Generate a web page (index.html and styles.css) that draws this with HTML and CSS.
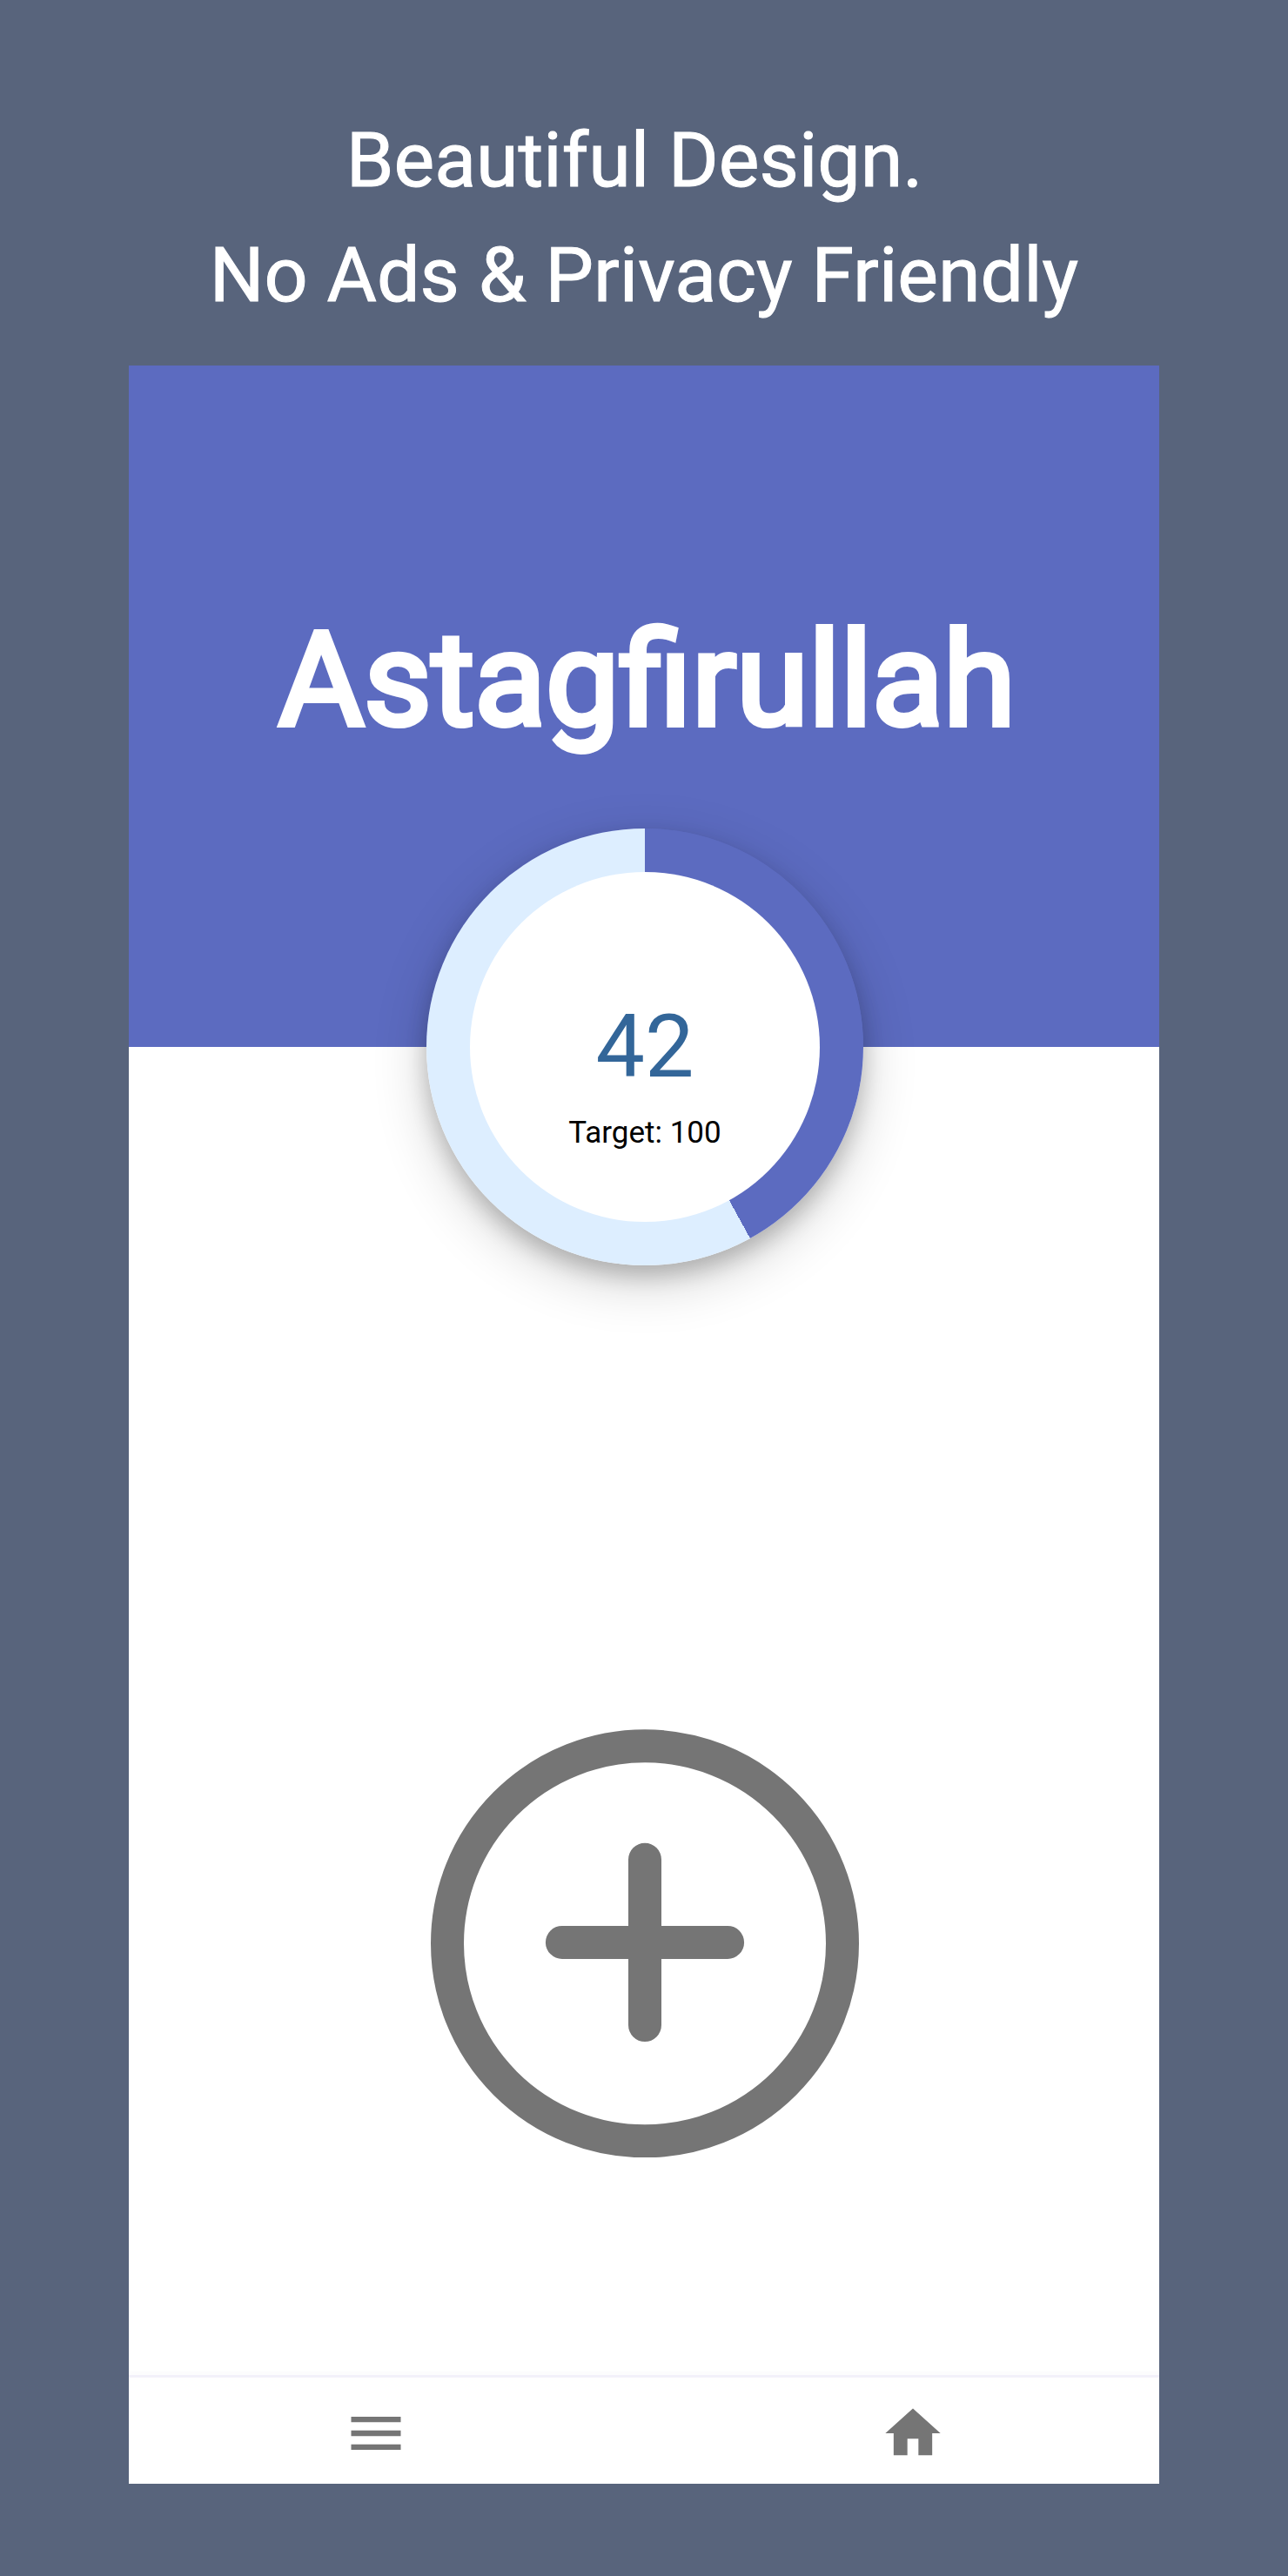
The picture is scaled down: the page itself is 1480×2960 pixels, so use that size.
FILE: index.html
```html
<!DOCTYPE html>
<html lang="en">
<head>
  <meta charset="utf-8">
  <title>Tasbih Counter</title>
  <link rel="stylesheet" href="styles.css">
</head>
<body>
  <header class="headline">Beautiful Design.&nbsp;<br>No Ads &amp; Privacy Friendly</header>
  <main class="phone">
    <section class="hero">
      <h1 class="phrase">Astagfirullah</h1>
    </section>
    <section class="counter">
      <div class="dial">
        <div class="dial-face">
          <span class="count">42</span>
          <span class="target">Target: 100</span>
        </div>
      </div>
      <button class="add" type="button" aria-label="Add">
        <svg class="add-icon" viewBox="0 0 492 492">
          <ellipse cx="246" cy="246.3" rx="227" ry="227"/>
          <path d="M150.9 244.9h190.2M246 149.7v190.4"/>
        </svg>
      </button>
    </section>
    <nav class="nav">
      <svg class="nav-icon" viewBox="0 0 24 24"><path d="M3 18h18v-2H3v2zm0-5h18v-2H3v2zm0-7v2h18V6H3z"/></svg>
      <svg class="nav-icon" viewBox="0 0 24 24"><path d="M10 20v-6h4v6h5v-8h3L12 3 2 12h3v8z"/></svg>
    </nav>
  </main>
</body>
</html>
```
FILE: styles.css
```css
* {
  box-sizing: border-box;
}

body {
  margin: 0;
  height: 2960px;
  background: #58647c;
  font-family: Roboto, sans-serif;
}

.headline {
  height: 420px;
  padding-top: 118px;
  color: #fff;
  font-size: 88px;
  line-height: 132px;
  text-align: center;
  -webkit-text-stroke: 1px #fff;
}

.phone {
  display: flex;
  flex-direction: column;
  width: 1184px;
  height: 2434px;
  margin: 0 auto;
  background: #fff;
}

.hero {
  height: 783px;
  padding: 274px 0 0 7px;
  background: #5c6bc0;
}

.phrase {
  margin: 0;
  color: #fff;
  font-size: 150.5px;
  font-weight: 400;
  line-height: 176px;
  text-align: center;
  -webkit-text-stroke: 6px #fff;
}

.counter {
  display: flex;
  flex: 1;
  flex-direction: column;
  align-items: center;
  gap: 533px;
  margin-top: -251px;
}

.dial {
  width: 502px;
  height: 502px;
  margin-left: 2px;
  padding: 50px;
  border-radius: 50%;
  background: conic-gradient(#5c6bc0 42%, #def 0);
  box-shadow: 0 12px 25px rgba(0, 0, 0, .2), 0 19px 63px rgba(0, 0, 0, .19);
}

.dial-face {
  display: flex;
  flex-direction: column;
  align-items: center;
  gap: 19px;
  height: 402px;
  padding-top: 142px;
  border-radius: 50%;
  background: #fff;
}

.count {
  color: #369;
  font-size: 100.5px;
  line-height: 118px;
}

.target {
  color: #000;
  font-size: 35px;
  line-height: 42px;
}

.add {
  width: 492px;
  height: 492px;
  margin-left: 1px;
  padding: 0;
  border: 0;
  background: none;
}

.add-icon {
  display: block;
  fill: none;
  stroke: #757575;
  stroke-width: 38;
  stroke-linecap: round;
}

.nav {
  display: flex;
  justify-content: space-between;
  height: 125px;
  padding: 26px 245px 0 246px;
  border-top: 3px solid #f3f1fa;
  box-shadow: 0 -4px 4px rgba(90, 60, 110, .015);
}

.nav-icon {
  width: 76px;
  height: 76px;
  fill: #757575;
}
```
